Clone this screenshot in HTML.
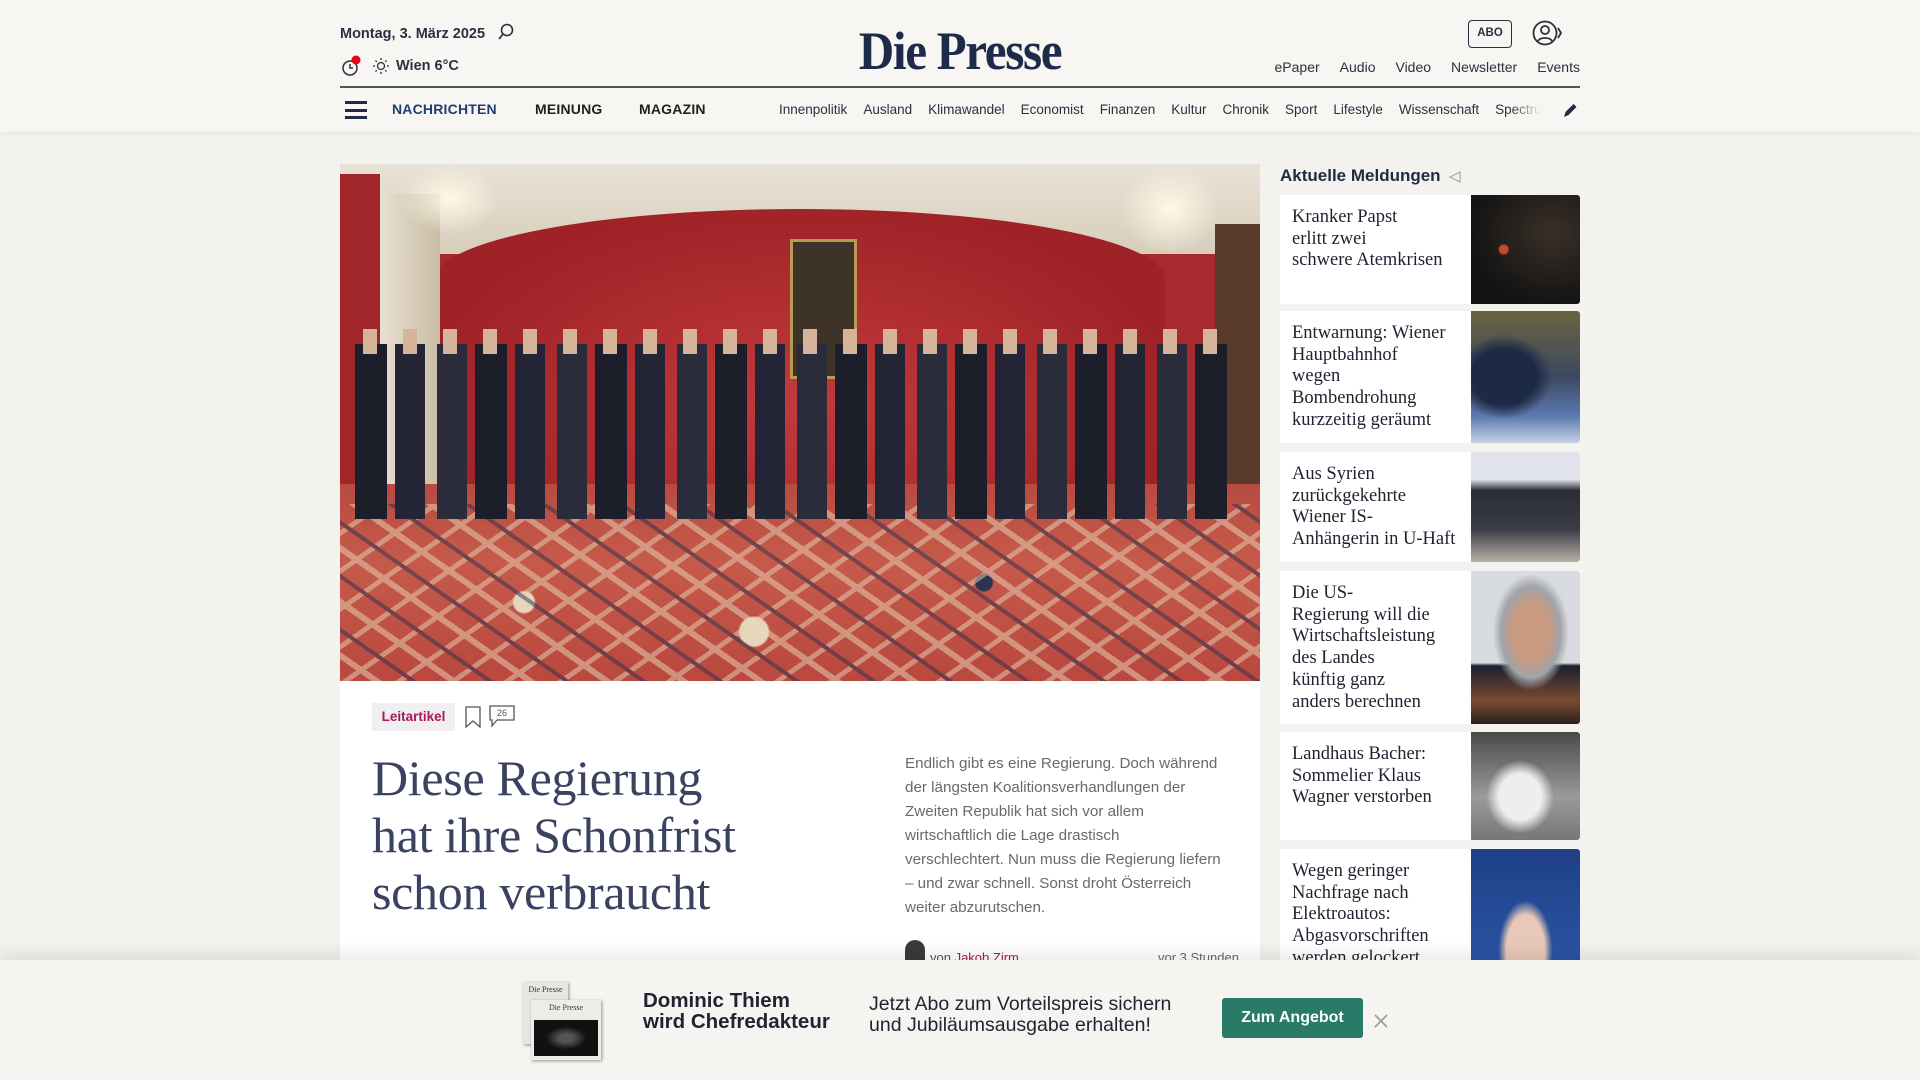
<!DOCTYPE html>
<html><head><meta charset="utf-8">
<style>
*{margin:0;padding:0;box-sizing:border-box}
html,body{width:1920px;height:1080px;overflow:hidden;background:#f3f2ee;font-family:"Liberation Sans",sans-serif;color:#1f2a44}
.hdr{position:absolute;left:0;top:0;width:1920px;height:132px;background:#f7f6f2;box-shadow:0 2px 6px rgba(0,0,0,.06)}
.abs{position:absolute}
.serif{font-family:"Liberation Serif",serif}
.nav a{position:absolute;top:101px;font-size:14px;font-weight:bold;color:#222;letter-spacing:.2px}
.sub span{margin-right:16px}
.item{position:absolute;left:1280px;width:300px;background:#fff;overflow:hidden}
.item .t{position:absolute;left:12px;top:12px;width:180px;white-space:nowrap;font-family:"Liberation Serif",serif;font-size:18.5px;line-height:21.7px;color:#1d2230}
.item .im{position:absolute;right:0;top:0;width:109px;height:100%;border-radius:0 3px 3px 0}
</style></head><body>
<div class="hdr">
  <div class="abs" style="left:340px;top:26px;font-size:14.5px;font-weight:bold;color:#2b3040">Montag, 3. März 2025</div>
  <svg class="abs" style="left:497px;top:22px" width="18" height="20" viewBox="0 0 18 20"><circle cx="10" cy="8" r="5.5" fill="none" stroke="#2b3040" stroke-width="1.6"/><line x1="6" y1="12" x2="2" y2="17" stroke="#2b3040" stroke-width="1.8"/></svg>
  <svg class="abs" style="left:340px;top:54px" width="24" height="24" viewBox="0 0 24 24"><circle cx="10" cy="14" r="7" fill="none" stroke="#2b3040" stroke-width="1.5"/><path d="M10 10v4h3" fill="none" stroke="#2b3040" stroke-width="1.5"/><circle cx="16" cy="6" r="4.5" fill="#e30613"/></svg>
  <svg class="abs" style="left:372px;top:57px" width="18" height="18" viewBox="0 0 18 18"><circle cx="9" cy="9" r="3.5" fill="none" stroke="#2b3040" stroke-width="1.3"/><g stroke="#2b3040" stroke-width="1.3"><line x1="9" y1="1" x2="9" y2="3"/><line x1="9" y1="15" x2="9" y2="17"/><line x1="1" y1="9" x2="3" y2="9"/><line x1="15" y1="9" x2="17" y2="9"/><line x1="3.5" y1="3.5" x2="4.8" y2="4.8"/><line x1="13.2" y1="13.2" x2="14.5" y2="14.5"/><line x1="3.5" y1="14.5" x2="4.8" y2="13.2"/><line x1="13.2" y1="4.8" x2="14.5" y2="3.5"/></g></svg>
  <div class="abs" style="left:396px;top:58px;font-size:14.5px;font-weight:bold;color:#2b3040">Wien 6°C</div>
  <div class="abs serif" style="left:0;width:1920px;text-align:center;top:20px;font-size:54px;font-weight:bold;color:#1d2a4a;letter-spacing:-1.5px;transform:scaleX(.91)">Die Presse</div>
  <div class="abs" style="left:1468px;top:20px;width:44px;height:28px;border:1.5px solid #2b3040;border-radius:4px;font-size:11.5px;font-weight:bold;text-align:center;line-height:25px;color:#2b3040">ABO</div>
  <svg class="abs" style="left:1532px;top:20px" width="30" height="28" viewBox="0 0 30 28"><circle cx="13" cy="13" r="11.5" fill="none" stroke="#2b3040" stroke-width="1.8"/><circle cx="13" cy="10" r="4" fill="none" stroke="#2b3040" stroke-width="1.8"/><path d="M6 21c2-4 12-4 14 0" fill="none" stroke="#2b3040" stroke-width="1.8"/><path d="M26 8l3 5-3 5" fill="none" stroke="#2b3040" stroke-width="1.8"/></svg>
  <div class="abs" style="right:340px;top:59px;font-size:14px;color:#2b3040">
    <span style="margin-right:20px">ePaper</span><span style="margin-right:20px">Audio</span><span style="margin-right:20px">Video</span><span style="margin-right:20px">Newsletter</span><span>Events</span></div>
  <div class="abs" style="left:340px;top:86px;width:1240px;height:1.5px;background:#555"></div>
  <div class="abs" style="left:345px;top:101px;width:22px;height:18px;border-top:3px solid #1f2a44;border-bottom:3px solid #1f2a44"><div style="margin-top:4.5px;height:3px;background:#1f2a44"></div></div>
  <div class="nav">
    <a style="left:392px;color:#1f3d73">NACHRICHTEN</a>
    <a style="left:535px">MEINUNG</a>
    <a style="left:639px">MAGAZIN</a>
  </div>
  <div class="abs sub" style="left:779px;top:102px;font-size:13.5px;color:#2b3040;white-space:nowrap;width:762px;overflow:hidden;-webkit-mask-image:linear-gradient(90deg,#000 96%,transparent)">
    <span>Innenpolitik</span><span>Ausland</span><span>Klimawandel</span><span>Economist</span><span>Finanzen</span><span>Kultur</span><span>Chronik</span><span>Sport</span><span>Lifestyle</span><span>Wissenschaft</span><span>Spectrum</span></div>
  <svg class="abs" style="left:1561px;top:101px" width="18" height="18" viewBox="0 0 18 18"><path d="M3 16l1.5-5 8-8 3 3-8 8z" fill="#1f2a44"/></svg>
</div>

<div class="abs" style="left:340px;top:164px;width:920px;height:517px;overflow:hidden;background:#a62a2e">
  <div class="abs" style="left:0;top:0;width:920px;height:90px;background:linear-gradient(180deg,#e9e2d6,#d8cdbb)"></div>
  <div class="abs" style="left:95px;top:45px;width:730px;height:280px;border-radius:50% 50% 0 0/25% 25% 0 0;background:radial-gradient(ellipse at 50% 70%,#c23a3c,#9e2226 75%)"></div>
  <div class="abs" style="left:0;top:10px;width:40px;height:320px;background:#a0262a"></div>
  <div class="abs" style="left:40px;top:30px;width:60px;height:320px;background:linear-gradient(90deg,#e7dfd0,#c9bda5)"></div>
  <div class="abs" style="left:875px;top:60px;width:45px;height:260px;background:#5a3a2c"></div>
  <div class="abs" style="left:450px;top:75px;width:67px;height:140px;background:#3d3328;border:3px solid #b99a52"></div>
  <div class="abs" style="left:60px;top:0;width:100px;height:70px;background:radial-gradient(ellipse,#fff8e5,rgba(255,255,255,0) 70%)"></div>
  <div class="abs" style="left:780px;top:0;width:100px;height:90px;background:radial-gradient(ellipse,#fff8e5,rgba(255,255,255,0) 70%)"></div>
  <div class="abs" style="left:0;top:320px;width:920px;height:197px;background:
    radial-gradient(circle at 20% 60%,#e6d6bc 0 10px,transparent 12px),
    radial-gradient(circle at 70% 50%,#2c3350 0 8px,transparent 10px),
    radial-gradient(circle at 45% 75%,#e6d6bc 0 14px,transparent 16px),
    linear-gradient(180deg,#b84b40,#c65a4a 40%,#b9483f)"></div>
  <div class="abs" style="left:0;top:340px;width:920px;height:177px;opacity:.5;background:repeating-linear-gradient(35deg,transparent 0 18px,#e8d8bd 18px 24px,transparent 24px 40px,#2b3150 40px 44px),repeating-linear-gradient(-35deg,transparent 0 26px,#e6d4b6 26px 31px)"></div>
  <div class="abs" style="left:15px;top:180px;width:880px;height:175px;background:repeating-linear-gradient(90deg,#1c1e2a 0 32px,transparent 32px 40px,#232536 40px 70px,transparent 70px 82px,#2a2c3c 82px 112px,transparent 112px 120px)"></div>
  <div class="abs" style="left:15px;top:165px;width:880px;height:25px;background:repeating-linear-gradient(90deg,transparent 0 8px,#d6b49a 8px 22px,transparent 22px 40px)"></div>
</div>

<div class="abs" style="left:340px;top:681px;width:920px;height:290px;background:#fff"></div>
<div class="abs" style="left:372px;top:703px;width:83px;height:28px;background:#f2eff2;color:#a8185a;font-size:13.5px;font-weight:bold;text-align:center;line-height:28px">Leitartikel</div>
<svg class="abs" style="left:464px;top:706px" width="18" height="22" viewBox="0 0 18 22"><path d="M2 1h14v20l-7-6-7 6z" fill="none" stroke="#555" stroke-width="1.3"/></svg>
<svg class="abs" style="left:488px;top:704px" width="28" height="24" viewBox="0 0 28 24"><path d="M2 2h24v14H9l-5 6v-6H2z" fill="none" stroke="#555" stroke-width="1.3"/><text x="14" y="12" font-size="9" text-anchor="middle" fill="#555" font-family="Liberation Sans">26</text></svg>
<div class="abs serif" style="left:372px;top:750px;width:520px;white-space:nowrap;font-size:50px;line-height:57px;color:#3a4260;letter-spacing:-0.3px">Diese Regierung<br>hat ihre Schonfrist<br>schon verbraucht</div>
<div class="abs" style="left:905px;top:752px;width:360px;white-space:nowrap;font-size:15.2px;line-height:24px;color:#666a70">Endlich gibt es eine Regierung. Doch während<br>der längsten Koalitionsverhandlungen der<br>Zweiten Republik hat sich vor allem<br>wirtschaftlich die Lage drastisch<br>verschlechtert. Nun muss die Regierung liefern<br>– und zwar schnell. Sonst droht Österreich<br>weiter abzurutschen.</div>
<div class="abs" style="left:905px;top:940px;width:20px;height:22px;border-radius:10px 10px 0 0;background:#3a3a3a"></div>
<div class="abs" style="left:930px;top:950px;font-size:13px;color:#555">von <span style="color:#a8185a">Jakob Zirm</span></div>
<div class="abs" style="left:1158px;top:950px;font-size:13px;color:#666">vor 3 Stunden</div>

<div class="abs" style="left:1280px;top:166px;font-size:17px;font-weight:bold;color:#1f2a44">Aktuelle Meldungen</div>
<svg class="abs" style="left:1448px;top:169px" width="16" height="16" viewBox="0 0 16 16"><path d="M2 8l10-5v10z" fill="none" stroke="#aaa" stroke-width="1.2"/></svg>
<div class="item" style="top:195px;height:109px"><div class="t">Kranker Papst<br>erlitt zwei<br>schwere Atemkrisen</div><div class="im" style="background:radial-gradient(circle at 30% 50%,#c44a2a 0 4px,transparent 6px),radial-gradient(ellipse at 75% 35%,#3a3028,#141414 70%)"></div></div>
<div class="item" style="top:311px;height:132px"><div class="t">Entwarnung: Wiener<br>Hauptbahnhof<br>wegen<br>Bombendrohung<br>kurzzeitig geräumt</div><div class="im" style="background:radial-gradient(ellipse at 30% 50%,#1d2a45 0 30%,transparent 45%),linear-gradient(180deg,#6a6440,#3c4860 50%,#5b7ab0 80%,#c8d2e6)"></div></div>
<div class="item" style="top:452px;height:110px"><div class="t">Aus Syrien<br>zurückgekehrte<br>Wiener IS-<br>Anhängerin in U-Haft</div><div class="im" style="background:linear-gradient(180deg,#e0e4ea 0 25%,#2b2c34 35%,#3a3c46 70%,#b7b2a8)"></div></div>
<div class="item" style="top:571px;height:153px"><div class="t">Die US-<br>Regierung will die<br>Wirtschaftsleistung<br>des Landes<br>künftig ganz<br>anders berechnen</div><div class="im" style="background:radial-gradient(ellipse at 55% 40%,#c99a82 0 22%,#a0a4a8 35%,transparent 45%),linear-gradient(180deg,#d8dbe0 0 60%,#1c2030 62%,#7a4a30 85%,#2a2020)"></div></div>
<div class="item" style="top:732px;height:108px"><div class="t">Landhaus Bacher:<br>Sommelier Klaus<br>Wagner verstorben</div><div class="im" style="background:radial-gradient(ellipse at 45% 60%,#eee 0 25%,transparent 40%),linear-gradient(180deg,#4a4a4a,#9a9a9a 60%,#777)"></div></div>
<div class="item" style="top:849px;height:120px"><div class="t">Wegen geringer<br>Nachfrage nach<br>Elektroautos:<br>Abgasvorschriften<br>werden gelockert</div><div class="im" style="background:radial-gradient(ellipse at 50% 85%,#e8c8b8 0 25%,transparent 35%),linear-gradient(180deg,#1e3f86,#2c56a6)"></div></div>

<div class="abs" style="left:0;top:960px;width:1920px;height:120px;background:#f5f4f0;box-shadow:0 -8px 14px rgba(0,0,0,.08)"></div>
<div class="abs" style="left:523px;top:982px;width:45px;height:62px;background:#e8e6e0;box-shadow:1px 1px 3px rgba(0,0,0,.4)"><div class="serif" style="font-size:8px;text-align:center;margin-top:3px;color:#333">Die Presse</div></div>
<div class="abs" style="left:531px;top:1000px;width:70px;height:60px;background:#eeece6;box-shadow:1px 1px 3px rgba(0,0,0,.4)"><div class="serif" style="font-size:8px;text-align:center;margin-top:3px;color:#333">Die Presse</div><div style="margin:8px 3px 0;height:36px;background:radial-gradient(ellipse at 50% 50%,#555 0 15%,#111 45%)"></div></div>
<div class="abs" style="left:643px;top:990px;font-size:20.5px;font-weight:bold;line-height:21px;color:#1f2430">Dominic Thiem<br>wird Chefredakteur</div>
<div class="abs" style="left:869px;top:994px;font-size:19.5px;line-height:21px;color:#1f2430">Jetzt Abo zum Vorteilspreis sichern<br>und Jubiläumsausgabe erhalten!</div>
<div class="abs" style="left:1222px;top:998px;width:141px;height:40px;background:#2a7a68;border-radius:3px;color:#fff;font-size:16px;font-weight:bold;text-align:center;line-height:40px">Zum Angebot</div>
<svg class="abs" style="left:1374px;top:1014px" width="14" height="14" viewBox="0 0 14 14"><path d="M1 1l12 12M13 1L1 13" stroke="#999" stroke-width="1.6"/></svg>
</body></html>
